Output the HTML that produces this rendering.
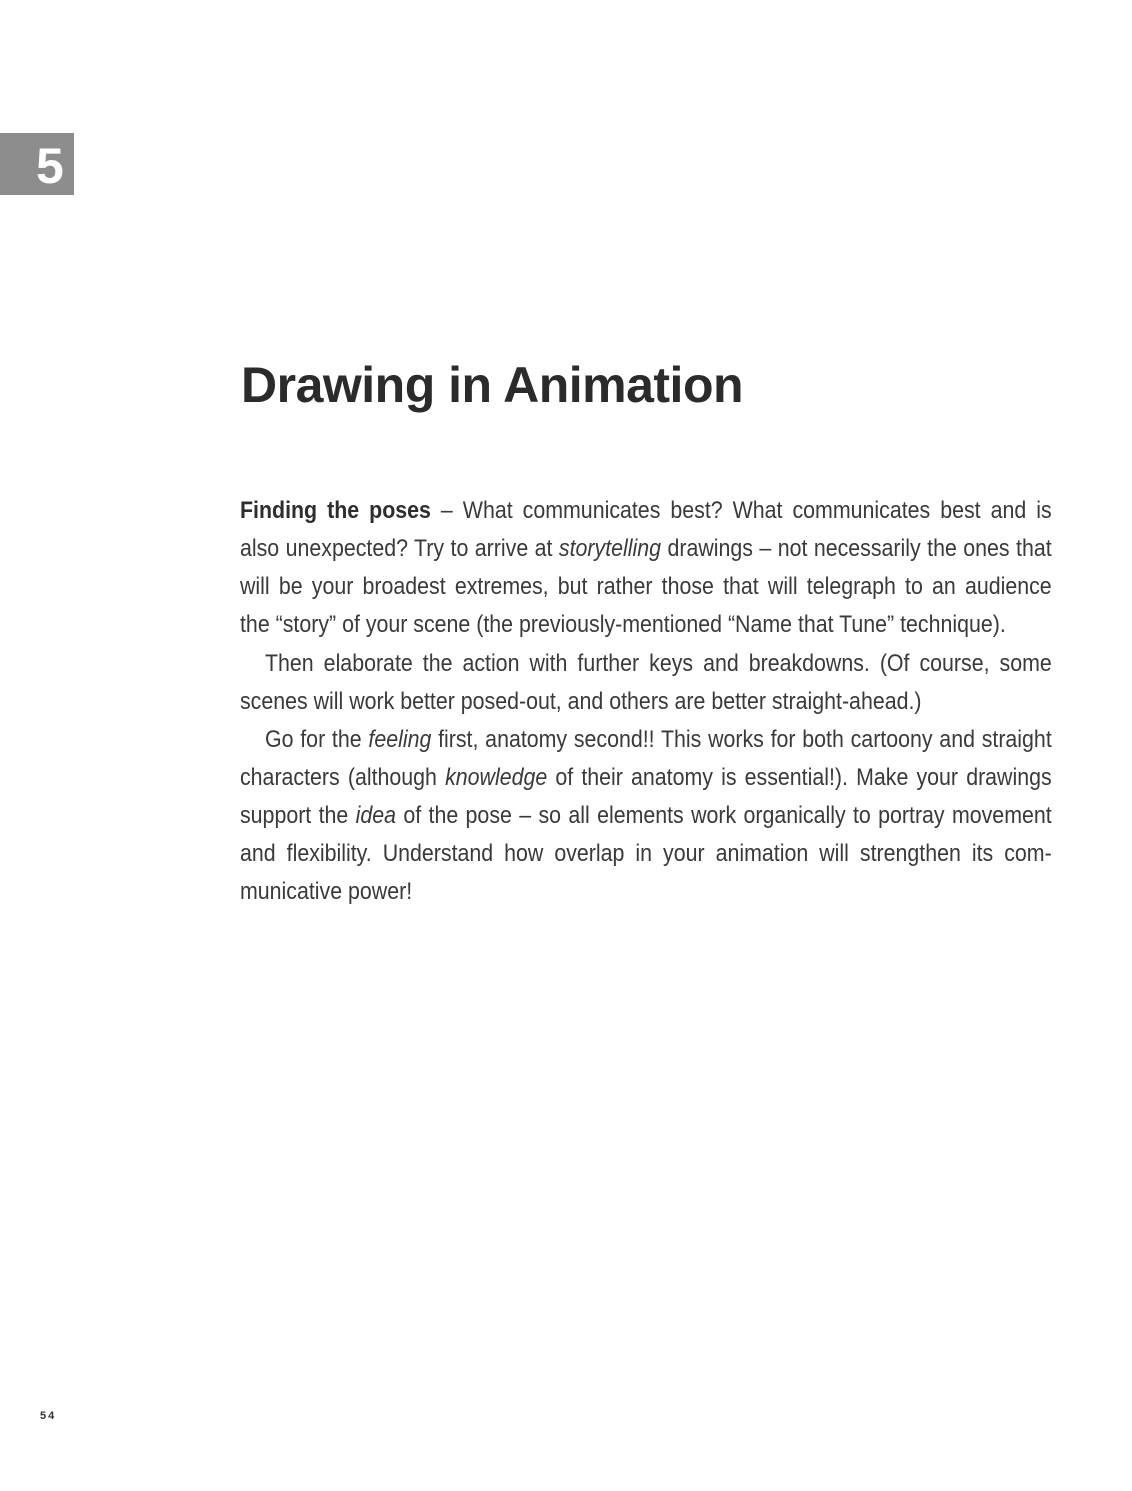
<!DOCTYPE html>
<html><head><meta charset="utf-8"><style>
html,body{margin:0;padding:0;background:#fff;}
body{width:1132px;height:1491px;position:relative;overflow:hidden;font-family:"Liberation Sans",sans-serif;color:#3a3a3a;}
.box{position:absolute;left:0;top:133px;width:74px;height:62px;background:#8d8d8d;}
.box span{position:absolute;left:36px;top:4px;font-size:50px;font-weight:bold;color:#fff;}
h1{position:absolute;left:241px;top:356px;margin:0;font-size:50px;font-weight:bold;color:#2b2b2b;transform:scaleX(1.0);transform-origin:left;letter-spacing:-0.5px;white-space:nowrap;}
.l{position:absolute;left:240px;width:912px;height:38px;line-height:38px;font-size:24px;white-space:nowrap;transform:scaleX(0.89);transform-origin:left;text-align:justify;text-align-last:justify;}
.n{text-align-last:left;}
b{color:#2e2e2e;}
.pg{position:absolute;left:40px;top:1410px;font-size:11px;font-weight:bold;color:#333;letter-spacing:2px;}
</style></head><body>
<div class="box"><span>5</span></div>
<h1>Drawing in Animation</h1>
<div class="l" style="top:492px"><b>Finding the poses</b> – What communicates best? What communicates best and is</div>
<div class="l" style="top:530px">also unexpected? Try to arrive at <i>storytelling</i> drawings – not necessarily the ones that</div>
<div class="l" style="top:568px">will be your broadest extremes, but rather those that will telegraph to an audience</div>
<div class="l n" style="top:606px">the “story” of your scene (the previously-mentioned “Name that Tune” technique).</div>
<div class="l" style="top:645px;left:265px;width:884px">Then elaborate the action with further keys and breakdowns. (Of course, some</div>
<div class="l n" style="top:683px">scenes will work better posed-out, and others are better straight-ahead.)</div>
<div class="l" style="top:721px;left:265px;width:884px">Go for the <i>feeling</i> first, anatomy second!! This works for both cartoony and straight</div>
<div class="l" style="top:759px">characters (although <i>knowledge</i> of their anatomy is essential!). Make your drawings</div>
<div class="l" style="top:797px">support the <i>idea</i> of the pose – so all elements work organically to portray movement</div>
<div class="l" style="top:835px">and flexibility. Understand how overlap in your animation will strengthen its com-</div>
<div class="l n" style="top:873px">municative power!</div>
<div class="pg">54</div>
</body></html>
